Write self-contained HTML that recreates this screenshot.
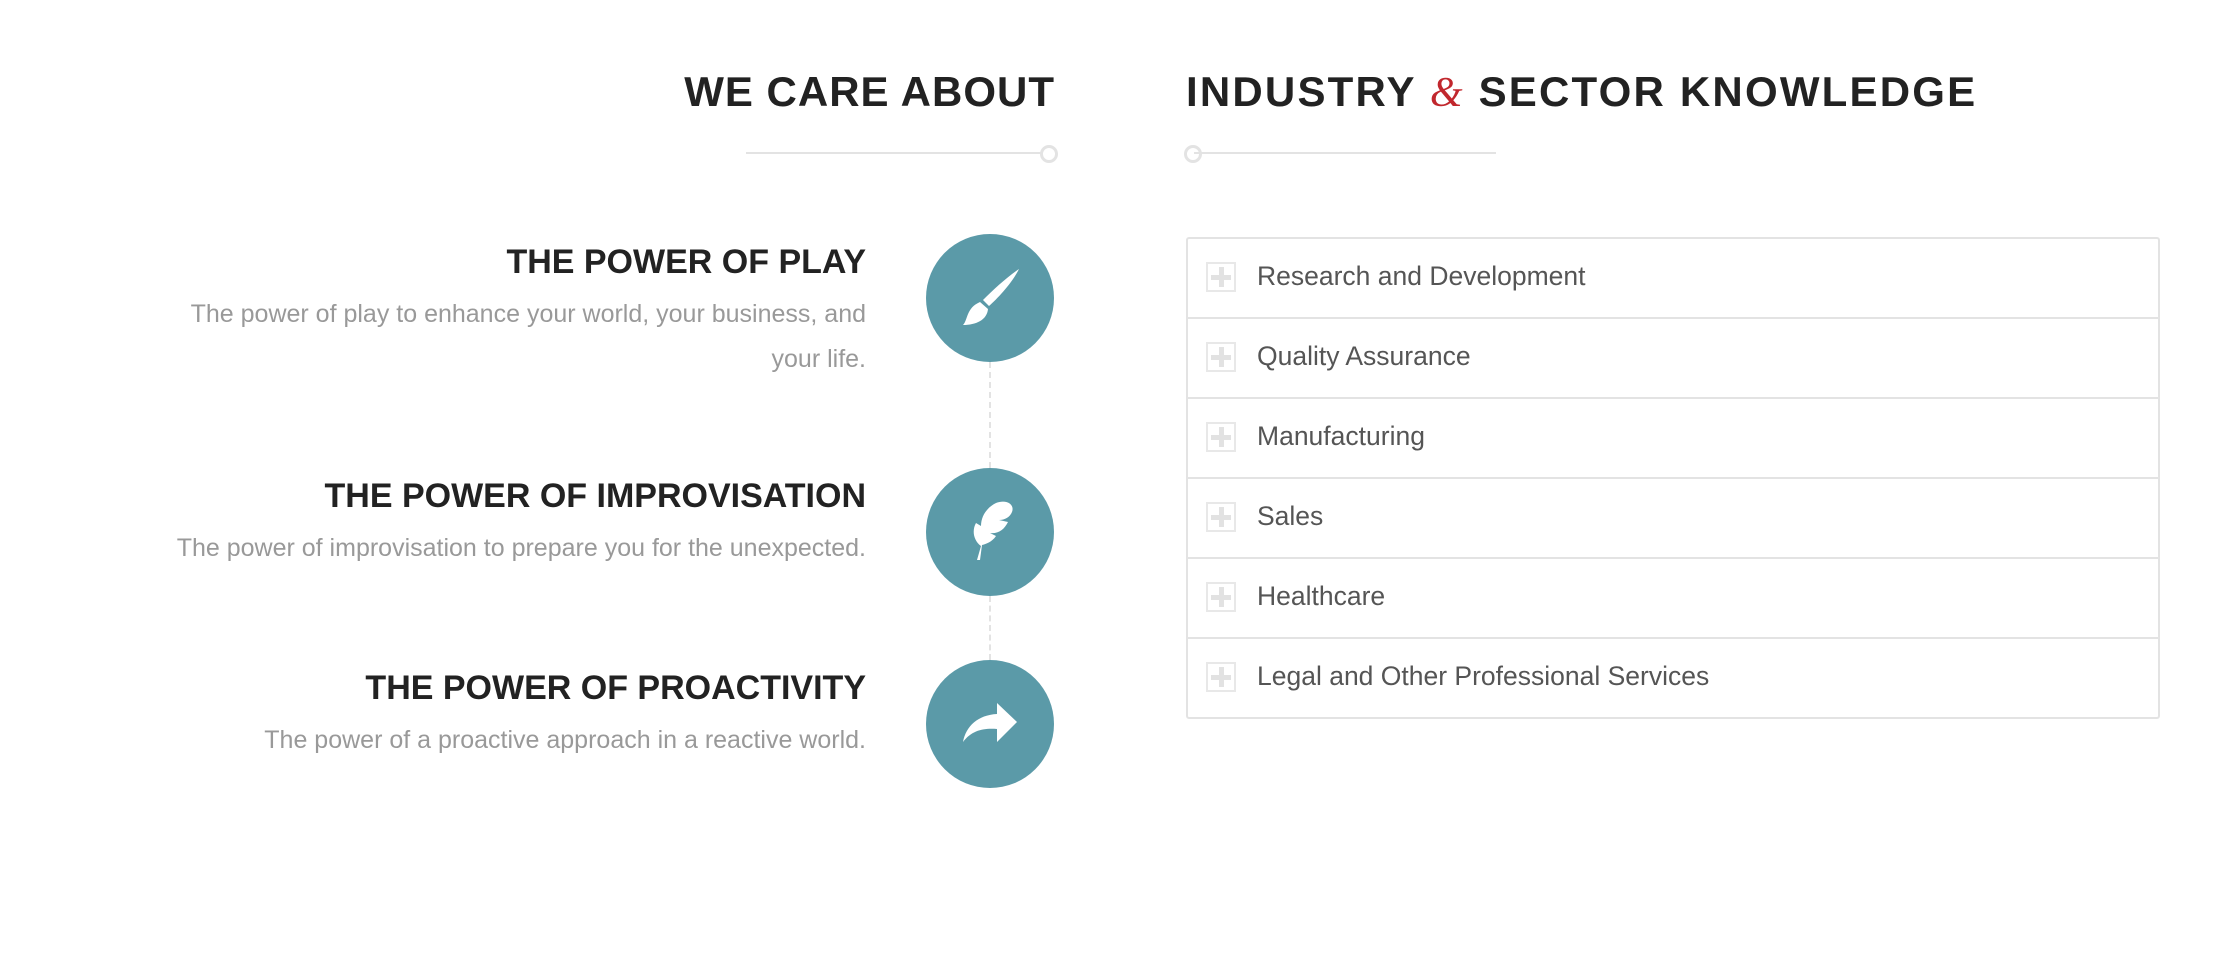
<!DOCTYPE html>
<html><head><meta charset="utf-8"><style>
html,body{margin:0;padding:0;background:#fff;}
body{width:2236px;height:972px;position:relative;overflow:hidden;font-family:"Liberation Sans",Arial,sans-serif;}
.abs{position:absolute;}
.h1{font-size:42px;font-weight:bold;color:#222;letter-spacing:1px;line-height:1;white-space:nowrap;}
.amp{font-family:"Liberation Serif",serif;font-style:italic;color:#c1272d;font-weight:normal;}
.h2{font-size:34px;font-weight:bold;color:#222;line-height:1;white-space:nowrap;text-align:right;right:1370px;}
.p{font-size:25px;color:#999;line-height:45px;text-align:right;right:1370px;}
.circ{position:absolute;left:926px;width:128px;height:128px;border-radius:50%;background:#5b9aa8;}
.acc{position:absolute;left:1186px;top:237px;width:974px;border:2px solid #e3e3e3;border-radius:3px;box-sizing:border-box;}
.row{height:80px;border-top:2px solid #e3e3e3;box-sizing:border-box;position:relative;}
.row:first-child{border-top:none;height:78px;}
.pl{position:absolute;left:18px;top:23px;width:30px;height:30px;border:2px solid #e8e8e8;box-sizing:border-box;}
.pl:before{content:"";position:absolute;left:11px;top:3px;width:5px;height:20px;background:#e2e2e2;}
.pl:after{content:"";position:absolute;left:3px;top:11px;width:20px;height:5px;background:#e2e2e2;}
.row span{position:absolute;left:69px;top:22px;font-size:26.5px;color:#555;line-height:30px;}
</style></head><body>
<div class="abs h1" style="right:1181px;top:71px;">WE CARE ABOUT</div>
<div class="abs" style="left:746px;top:152px;width:295px;height:2px;background:#e3e3e3;"></div>
<div class="abs" style="left:1040px;top:145px;width:12px;height:12px;border:3px solid #e3e3e3;border-radius:50%;"></div>

<div class="abs h1" style="left:1186px;top:71px;letter-spacing:2.2px;">INDUSTRY <span class="amp">&amp;</span> SECTOR KNOWLEDGE</div>
<div class="abs" style="left:1194px;top:152px;width:302px;height:2px;background:#e3e3e3;"></div>
<div class="abs" style="left:1184px;top:145px;width:12px;height:12px;border:3px solid #e3e3e3;border-radius:50%;"></div>

<div class="abs" style="left:989px;top:362px;width:0;height:106px;border-left:2px dashed #e3e3e3;"></div>
<div class="abs" style="left:989px;top:596px;width:0;height:64px;border-left:2px dashed #e3e3e3;"></div>

<div class="abs h2" style="top:245px;">THE POWER OF PLAY</div>
<div class="abs p" style="top:292px;width:720px;">The power of play to enhance your world, your business, and your life.</div>
<div class="abs h2" style="top:479px;">THE POWER OF IMPROVISATION</div>
<div class="abs p" style="top:526px;">The power of improvisation to prepare you for the unexpected.</div>
<div class="abs h2" style="top:671px;">THE POWER OF PROACTIVITY</div>
<div class="abs p" style="top:718px;">The power of a proactive approach in a reactive world.</div>

<div class="circ" style="top:234px;"><svg width="128" height="128" viewBox="-64 -64 128 128"><path fill="#fff" d="M29,-29 C22,-15 8,0 -1,8 L-7,2 C3,-8 16,-20 29,-29Z M-10,4 L-2,11 C-3,22 -14,27 -27,27 C-22,22 -24,10 -10,4Z"/></svg></div>
<div class="circ" style="top:468px;"><svg width="128" height="128" viewBox="-64 -64 128 128"><path fill="#fff" d="M-13,28 L-9,14 C-17,8 -18,-2 -14,-9 L-9,-6 C-9,-15 -4,-24 6,-29 C16,-33 25,-28 22,-20 C20,-15 15,-12 9,-12 L18,-10 C14,-2 8,2 0,1 L6,4 C2,10 -4,12 -8,13 L-10,28 Z"/></svg></div>
<div class="circ" style="top:660px;"><svg width="128" height="128" viewBox="-64 -64 128 128"><path fill="#fff" d="M27,-2 L7,-21 L7,-10 C-12,-9 -24,2 -27,18 C-18,6 -6,4 7,5 L7,18 Z"/></svg></div>

<div class="acc">
<div class="row"><div class="pl"></div><span>Research and Development</span></div>
<div class="row"><div class="pl"></div><span>Quality Assurance</span></div>
<div class="row"><div class="pl"></div><span>Manufacturing</span></div>
<div class="row"><div class="pl"></div><span>Sales</span></div>
<div class="row"><div class="pl"></div><span>Healthcare</span></div>
<div class="row"><div class="pl"></div><span>Legal and Other Professional Services</span></div>
</div>
</body></html>
